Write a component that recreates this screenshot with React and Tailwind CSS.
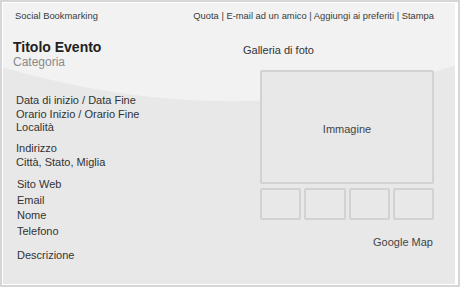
import React from "react";

function Wave() {
  return (
    <svg
      className="absolute inset-0 h-full w-full"
      viewBox="0 0 452 279"
      preserveAspectRatio="none"
    >
      <rect x="0" y="0" width="452" height="279" fill="#e8e8e8" />
      <path d="M0 0 H452 V62 Q237 132 0 64 Z" fill="#f2f2f2" />
    </svg>
  );
}

function App() {
  return (
    <div
      className="w-[460px] h-[287px] bg-white border-2 border-[#d6d6d6] pl-[1px] pt-[1px] pr-[1px] pb-[1px]"
      style={{ fontFamily: '"Liberation Sans", Arial, sans-serif' }}
    >
      <div className="relative h-full w-[452px] overflow-hidden">
        <Wave />
        <div className="relative text-[#333]">
          {/* Header */}
          <div className="flex justify-between pl-[12px] pr-[21px] pt-[7px] text-[9.4px] leading-[12px] text-[#3a3a3a]">
            <span>Social Bookmarking</span>
            <span>Quota | E-mail ad un amico | Aggiungi ai preferiti | Stampa</span>
          </div>

          <div className="flex">
            {/* Left column */}
            <div className="w-[240px] pl-[10px]">
              <h1 className="mt-[17px] text-[14px] leading-[16px] font-bold text-[#222]">
                Titolo Evento
              </h1>
              <p className="text-[12px] leading-[14px] text-[#8a8a8a]">Categoria</p>

              <div className="mt-[25px] pl-[3px] text-[11px] leading-[13.5px]">
                <p>Data di inizio / Data Fine</p>
                <p>Orario Inizio / Orario Fine</p>
                <p>Località</p>
              </div>

              <div className="mt-[7.5px] pl-[3px] text-[11px] leading-[13.5px]">
                <p>Indirizzo</p>
                <p>Città, Stato, Miglia</p>
              </div>

              <div className="mt-[8px] pl-[4px] text-[11px] leading-[15.5px]">
                <p>Sito Web</p>
                <p>Email</p>
                <p>Nome</p>
                <p>Telefono</p>
              </div>

              <p className="mt-[8.5px] pl-[4px] text-[11px] leading-[15.5px]">Descrizione</p>
            </div>

            {/* Right column */}
            <div className="w-[190px]">
              <p className="mt-[22px] text-[11px] leading-[12px]">Galleria di foto</p>
              <div className="ml-[17px] mt-[14px] flex h-[114px] w-[174px] items-center justify-center rounded-[2px] border-2 border-[#d2d2d2] bg-[#e8e8e8] pt-[4px] text-[11px] text-[#444]">
                Immagine
              </div>
              <div className="ml-[17px] mt-[4px] flex w-[174px] gap-[3px]">
                <div className="h-[32px] flex-1 rounded-[2px] border-2 border-[#d2d2d2]" />
                <div className="h-[32px] flex-1 rounded-[2px] border-2 border-[#d2d2d2]" />
                <div className="h-[32px] flex-1 rounded-[2px] border-2 border-[#d2d2d2]" />
                <div className="h-[32px] flex-1 rounded-[2px] border-2 border-[#d2d2d2]" />
              </div>
              <p className="mt-[16px] text-right text-[11px] leading-[12px] text-[#444]">
                Google Map
              </p>
            </div>
          </div>
        </div>
      </div>
    </div>
  );
}

export default App;
